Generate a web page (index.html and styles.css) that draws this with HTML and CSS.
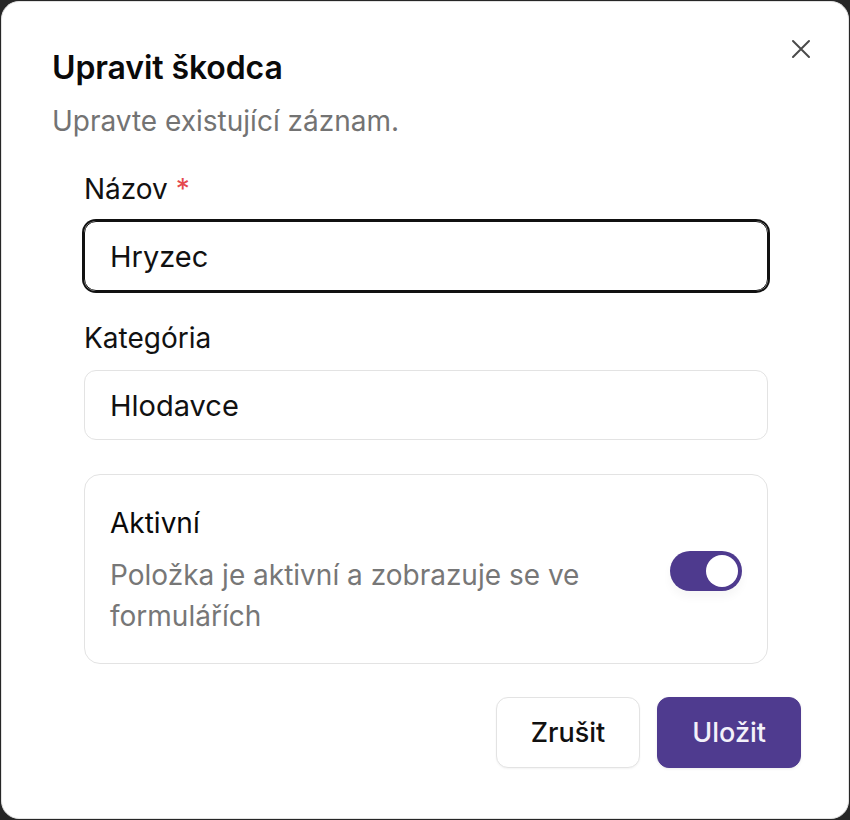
FILE: index.html
```html
<!DOCTYPE html>
<html lang="sk">
<head>
<meta charset="utf-8">
<title>Upravit škodca</title>
<link rel="stylesheet" href="styles.css">
</head>
<body>
<div class="dialog">
  <button class="close" aria-label="Zavřít">
    <svg width="20" height="20" viewBox="0 0 20 20"><path d="M2 2 L18 18 M18 2 L2 18" stroke="#4a4a4a" stroke-width="2" stroke-linecap="round" fill="none"/></svg>
  </button>
  <h2 class="title">Upravit škodca</h2>
  <p class="subtitle">Upravte existující záznam.</p>
  <form class="form">
    <div class="field">
      <label class="label">Názov <span class="req">*</span></label>
      <div class="input input-focus">Hryzec</div>
    </div>
    <div class="field">
      <label class="label">Kategória</label>
      <div class="input">Hlodavce</div>
    </div>
    <div class="card">
      <div class="card-text">
        <div class="card-title">Aktivní</div>
        <div class="card-desc">Položka je aktivní a zobrazuje se ve formulářích</div>
      </div>
      <div class="toggle"><span class="knob"></span></div>
    </div>
  </form>
  <div class="actions">
    <button class="btn btn-outline">Zrušit</button>
    <button class="btn btn-primary">Uložit</button>
  </div>
</div>
</body>
</html>
```
FILE: styles.css
```css
html, body {
  margin: 0;
  padding: 0;
}
body {
  background: #262626;
  font-family: "Inter", "Liberation Sans", sans-serif;
  width: 850px;
  height: 820px;
  padding: 1px;
  box-sizing: border-box;
}
.dialog {
  position: relative;
  box-sizing: border-box;
  width: 848px;
  height: 818px;
  background: #ffffff;
  border: 1px solid #e2e2e2;
  border-radius: 18px;
  padding: 46px 47px 0 50px;
}
.close {
  position: absolute;
  top: 37px;
  right: 37px;
  width: 20px;
  height: 20px;
  padding: 0;
  border: 0;
  background: transparent;
  display: flex;
}
.title {
  margin: 0;
  font-size: 32px;
  line-height: 40px;
  font-weight: 600;
  color: #0a0a0a;
  letter-spacing: -0.1px;
}
.subtitle {
  margin: 15px 0 0;
  font-size: 28px;
  line-height: 36px;
  color: #737373;
}
.form {
  margin: 34px 33px 0 32px;
  display: flex;
  flex-direction: column;
}
.field {
  display: flex;
  flex-direction: column;
  gap: 16px;
  margin-bottom: 31px;
}
.field + .field {
  margin-bottom: 34px;
}
.label {
  font-size: 28px;
  line-height: 32px;
  font-weight: 400;
  color: #111111;
}
.req {
  color: #e5484d;
}
.input {
  box-sizing: border-box;
  height: 70px;
  border: 1px solid #e3e3e3;
  border-radius: 12px;
  padding: 0 25px;
  display: flex;
  align-items: center;
  font-size: 29px;
  color: #111111;
}
.input-focus {
  border-color: #111111;
  box-shadow: 0 0 0 2px #111111;
}
.card {
  box-sizing: border-box;
  height: 190px;
  border: 1px solid #e3e3e3;
  border-radius: 16px;
  padding: 28px 25px 24px 25px;
  display: flex;
  align-items: center;
  justify-content: space-between;
  gap: 24px;
}
.card-text {
  align-self: flex-start;
  max-width: 530px;
}
.card-title {
  font-size: 28px;
  line-height: 40px;
  font-weight: 400;
  color: #0a0a0a;
}
.card-desc {
  margin-top: 12px;
  font-size: 28px;
  line-height: 41px;
  color: #777777;
}
.toggle {
  position: relative;
  flex: none;
  width: 72px;
  height: 40px;
  border-radius: 20px;
  background: #4e3a8e;
  box-shadow: 0 6px 10px rgba(0, 0, 0, 0.04);
}
.knob {
  position: absolute;
  top: 4px;
  right: 4px;
  width: 32px;
  height: 32px;
  border-radius: 50%;
  background: #ffffff;
}
.actions {
  margin-top: 33px;
  display: flex;
  justify-content: flex-end;
  gap: 17px;
}
.btn {
  box-sizing: border-box;
  height: 71px;
  padding: 0 34px;
  border-radius: 12px;
  font-family: inherit;
  font-size: 27px;
  font-weight: 500;
}
.btn-outline {
  background: #ffffff;
  border: 1px solid #e3e3e3;
  color: #111111;
  box-shadow: 0 1px 2px rgba(0, 0, 0, 0.05);
}
.btn-primary {
  background: #4f3b8f;
  border: 1px solid #4f3b8f;
  color: #f3f1fa;
  box-shadow: 0 1px 3px rgba(0, 0, 0, 0.08);
}
```
